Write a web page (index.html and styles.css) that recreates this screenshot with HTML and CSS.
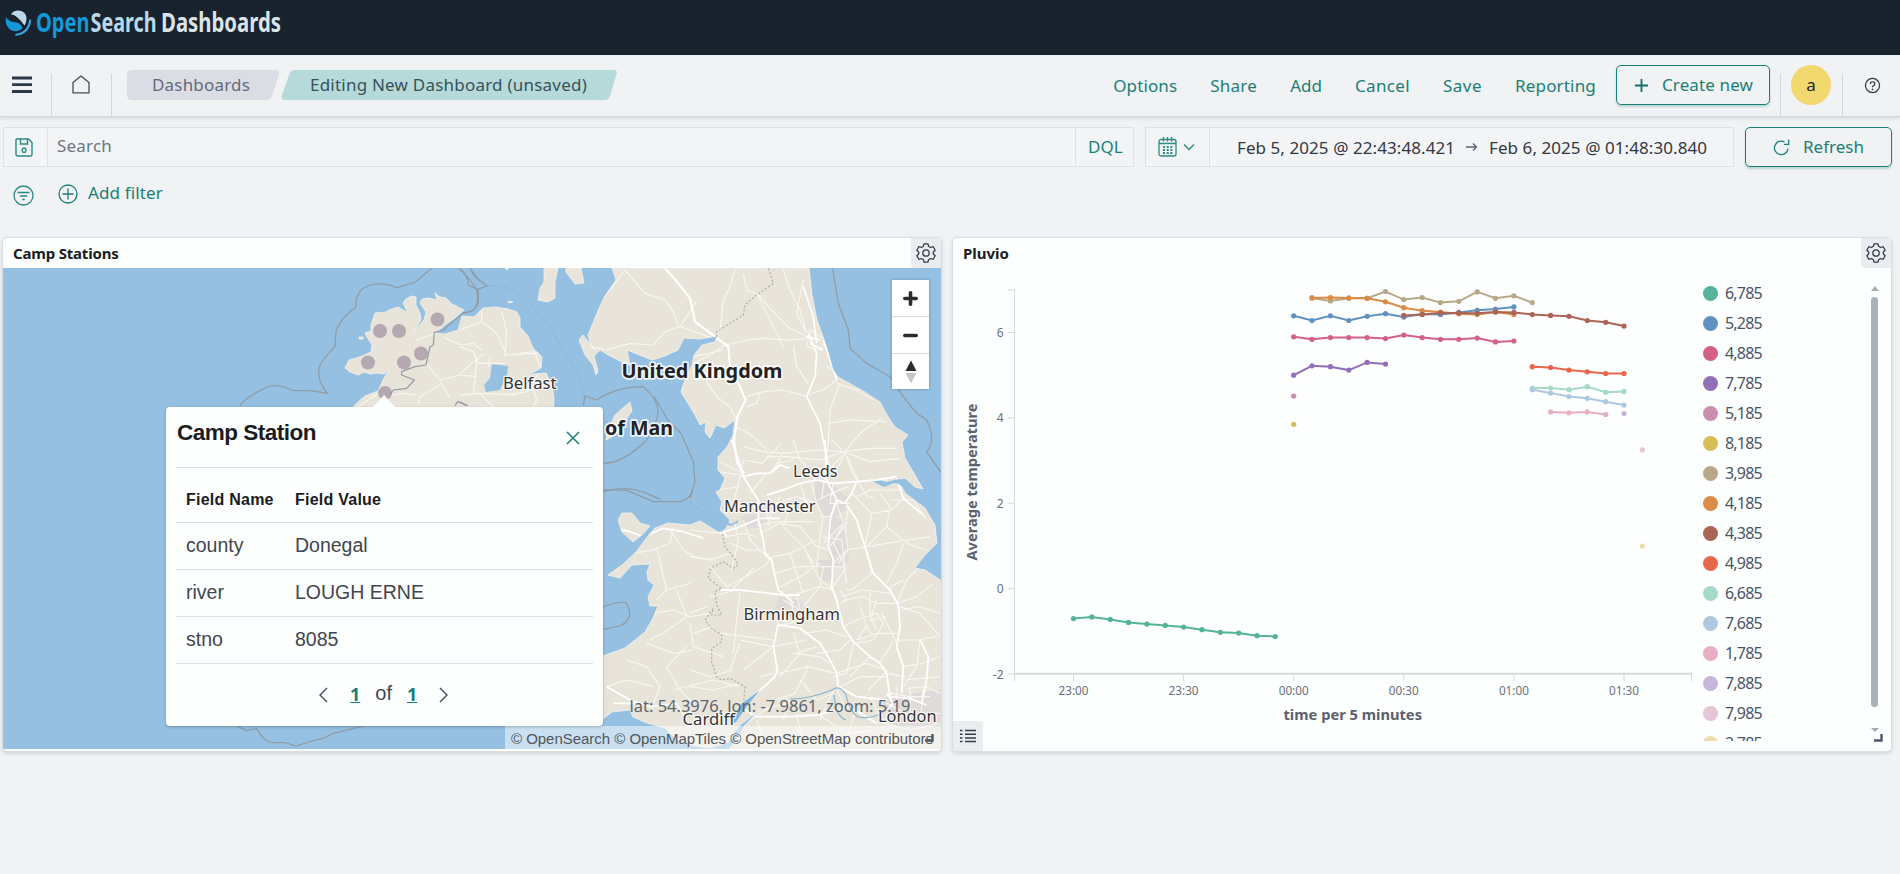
FILE: index.html
```html
<!DOCTYPE html>
<html lang="en">
<head>
<meta charset="utf-8">
<title>Editing New Dashboard (unsaved) - OpenSearch Dashboards</title>
<link rel="stylesheet" href="styles.css">
</head>
<body>
<header class="brandbar">
  <svg class="brand" viewBox="0 0 290 44" width="290" height="44">
    <path fill="#b9d9eb" d="M11 14.500C13 10 20 9 24 12.500c3.500 3.500 3 9 .5 13-1.500-1.500-2.500-3.500-4.500-5.500C17 17 14 14 11 14.500z"/>
    <path fill="#1297d8" d="M6 17c1.500 3 4 4.500 7.500 5C17 22.500 21 23 22.500 28c-4 4.500-10 4-13.500.5C6 25.500 5 21 6 17z"/>
    <path fill="#3ba6dc" d="M30 19.500c1 0 1.300.6 1.200 1.600C30 29.500 24 35.500 16 35.800c-1.200 0-1.200-1.800 0-2C23 33 28 28 29 20.700c.1-.8.300-1.200 1-1.200z"/>
    <text x="36" y="31.500" fill="#1297d8" textLength="53.500" lengthAdjust="spacingAndGlyphs">Open</text>
    <text x="90.500" y="31.500" fill="#b9d9eb" textLength="66" lengthAdjust="spacingAndGlyphs">Search</text>
    <text x="161" y="31.500" fill="#dce4ea" textLength="120" lengthAdjust="spacingAndGlyphs">Dashboards</text>
  </svg>
</header>

<nav class="navbar">
  <div class="nav-cell menu"><svg viewBox="0 0 20 18" width="20" height="18"><path d="M0 2h20M0 8.700h20M0 15.500h20" stroke="#2b3a4b" stroke-width="2.800"/></svg></div>
  <div class="nav-cell home"><svg viewBox="0 0 18 19" width="18" height="19"><path d="M1 7.500 9 1l8 6.500v10.300H1z" fill="none" stroke="#434d5b" stroke-width="1.300" stroke-linejoin="round"/></svg></div>
  <div class="crumbs">
    <svg class="crumb-bg" viewBox="0 0 491 30" width="491" height="30"><path fill="#dadde4" d="M5 0h144q4 0 3 4l-7 22q-1.500 4-5 4H5q-5 0-5-5V5q0-5 5-5z"/><path fill="#b6dad9" d="M168 0h318q5 0 3.500 4l-6.500 22q-1.200 4-5 4H158q-4.500 0-3.500-4l8-22q1.500-4 5.500-4z"/></svg>
    <span class="crumb c1">Dashboards</span>
    <span class="crumb c2">Editing New Dashboard (unsaved)</span>
  </div>
  <div class="actions">
    <a class="a-opt">Options</a><a class="a-share">Share</a><a>Add</a><a class="a-cancel">Cancel</a><a class="a-save">Save</a><a class="a-rep">Reporting</a>
  </div>
  <div class="btn create"><svg viewBox="0 0 13 13" width="13" height="13"><path d="M6.500 0v13M0 6.500h13" stroke="#0a7268" stroke-width="1.800"/></svg><span>Create new</span></div>
  <div class="avatar-cell"><span class="avatar">a</span></div>
  <div class="help"><svg viewBox="0 0 18 18" width="17" height="17"><circle cx="9" cy="9" r="7.500" fill="none" stroke="#343741" stroke-width="1.300"/><path d="M6.700 7.300c0-3 4.800-3 4.800-.2 0 1.900-2.500 1.700-2.500 3.700" fill="none" stroke="#343741" stroke-width="1.300"/><circle cx="9" cy="13" r=".9" fill="#343741"/></svg></div>
</nav>

<section class="querybar">
  <div class="search">
    <div class="saved"><svg viewBox="0 0 18 19" width="18" height="19"><g fill="none" stroke="#2c8a80" stroke-width="1.400"><path d="M2 1h11.500L17 4.500V16.500a1.500 1.500 0 0 1-1.500 1.500h-13A1.500 1.500 0 0 1 1 16.500V2a1 1 0 0 1 1-1z"/><path d="M5.500 1v5h7V1"/><rect x="7.300" y="10.300" width="3.600" height="4" rx="1"/></g></svg></div>
    <div class="placeholder">Search</div>
    <div class="dql">DQL</div>
  </div>
  <div class="dates">
    <div class="quick">
      <svg viewBox="0 0 19 20" width="19" height="20"><g fill="none" stroke="#2c8a80" stroke-width="1.300"><rect x="1" y="2.500" width="17" height="16.500" rx="2"/><path d="M1 6.500h17M5.500 0v4.500M9.500 0v4.500M13.500 0v4.500"/></g><path d="M5 10h9.500M5 13h9.500M5 16h9.500" stroke="#2c8a80" stroke-width="1.800" stroke-dasharray="2 1.700"/></svg>
      <svg viewBox="0 0 12 8" width="12" height="8"><path d="m1 1.500 5 5 5-5" fill="none" stroke="#2c8a80" stroke-width="1.300"/></svg>
    </div>
    <div class="range"><span>Feb 5, 2025 @ 22:43:48.421</span>
      <svg viewBox="0 0 12 10" width="12" height="10"><path d="M0 5h10.500M7 1.500 10.500 5 7 8.500" fill="none" stroke="#5a6270" stroke-width="1.300"/></svg>
      <span>Feb 6, 2025 @ 01:48:30.840</span></div>
  </div>
  <div class="btn refresh"><svg viewBox="0 0 17 17" width="17" height="17"><path d="M15 9.500A6.800 6.800 0 1 1 11.500 2.900M15.700.5v4.800h-4.800" fill="none" stroke="#1a7f75" stroke-width="1.300"/></svg><span>Refresh</span></div>
</section>

<section class="filters">
  <svg class="f-ic" viewBox="0 0 21 21" width="21" height="21"><g fill="none" stroke="#2c8a80" stroke-width="1.300"><circle cx="10.500" cy="10.500" r="9.500"/><path d="M4.500 7.500h12M6.800 11h7.400M9.300 14.500h2.400"/></g></svg>
  <svg class="f-add" viewBox="0 0 20 20" width="20" height="20"><g fill="none" stroke="#1a7f75" stroke-width="1.300"><circle cx="10" cy="10" r="9"/><path d="M10 4.500v11M4.500 10h11"/></g></svg>
  <span class="t-addf">Add filter</span>
</section>

<main class="grid">
  <article class="panel">
    <div class="panel-head"><h2 class="t-camp">Camp Stations</h2>
      <span class="gear"><svg viewBox="0 0 20 20" width="20" height="20"><path id="gear" d="M8 .8h4l.6 2.500 2 1.200 2.600-.8 2 3.500-1.900 1.800v2l1.900 1.800-2 3.500-2.600-.8-2 1.200-.6 2.500H8l-.6-2.500-2-1.200-2.600.8-2-3.500L2.700 11V9L.8 7.200l2-3.500 2.600.8 2-1.200z" fill="none" stroke="#343d4a" stroke-width="1.300" stroke-linejoin="round"/><circle cx="10" cy="10" r="3.200" fill="none" stroke="#343d4a" stroke-width="1.300"/></svg></span></div>
    <div class="map">
      <svg class="map-svg" viewBox="3 268 938 481" width="938" height="481">
        <defs><clipPath id="land">
          <path id="ireland" d="M435 293l5 4 6 1 6 6 12 6-9 8-9 6-10 9 9 1 13-4 4-14 12 1 9-9 12-1 13 2 9 3 3 6 0 9 8 9 5 12 9 9-1 11-9 5-8 4 10-3 12-1 5 10 3 14-1 24H340l18-19 7-6 13-5 6-13 5-8-5 4-6-1-8 1-6-2-6 3-8-3-5-4 4-8 7-2 6-2 9-4 1-7-5-8-2-4 6-2 0-6 4-12 11-1 3-2 9-3 5 3 5 3-5-10 3-4 6-3 4 1 0 8 4 8 1 7-7 11 10-11 2-8-6-9 2-4 7-1 8 2z"/>
          <path id="britain" d="M612 268l4 12-11 16-5 10-12 29 3 12 4 3-12-15-4 5 6 15 8 10 3 10 2-4-4-15 6-6 10 6 12 6 8 3-3-15 15 6 10 4 13-4 13-6 6-12 16 1 17-3-2 6-13 3-8 10-2 10-9 20-2 7 14 23 5 10 6-3-1 10 5 6 6-13 8 3 11-8-2 15-6 12-9 10 0 13 7 8-5 12-4 2 6 10-2 8 10 10-5 10-7 2-8-5-10-6-10 4-22-2-13 5-7 8-12 16-14 13-14 10 12 3 12-13 18-1-3 8 1 8 6 5-6 12 2 9 8 0-5 12-8 14-20 16-22 8-43 20v40l43 3 9-7 18-2 3 7 14 6 18 5 10 10 15 7 20 3 18-6 12-17 20-15-15 15-10 17-11 13-9 10-25 2-50 3H945V583l-20-13-10-2 10-13 12-12-2-18-10-17-20-15-3-6-12-9-22 4 17 0 20-4 10 9 8 2-8-14-10-17-3-16 6-7-13-8-8-12-7-13-15-10-27-15-5-7-7-25-9-25-5-25-3-27z"/>
          <path d="M618 520l4-7 10 0 8 10 10 3-7 8-10 8-11-10z"/>
        </clipPath></defs>
        <rect x="3" y="268" width="938" height="481" fill="#95c0e1"/>
        <g fill="#e8e4d9" stroke="#f4f2ec" stroke-width=".8">
          <use href="#ireland"/><use href="#britain"/>
          <path d="M618 520l4-7 10 0 8 10 10 3-7 8-10 8-11-10z"/>
          <path d="M544 268h14l-3 14 0 16-7 4-10-2 2-12 4-6zM566 268h15l3 15-9 1-9-12zM630 402l2 9-7 10-10 14-9 5 2-10 7-15zM359 337l4 0 0 2-4 0zM505 268h4l-2 2zM508 301l5 1-4 1z"/>
        </g>
        <g fill="#95c0e1"><path d="M492 364l16 2-1 9-7 15-14 2-2-7 6-7zM720 512l5 8 6 4 7-4 0 3-7 3-7-2zM868 481l8-2 10 3 12-3 8 4 8 6-10-4-10-2-10 4-10-5z"/></g>
        <g clip-path="url(#land)">
        <g fill="#dfdbd8"><path d="M815 480l8-1 12 8 12 10-2 12-14 10-10-6-6-12zM828 515l14 5 8 30-4 16-14 2-5-20zM740 516l15-2 14 4-8 10-16 0zM779 596l20 4 14 12-22 6-16-8zM882 698l59-8v40l-40 3-12-16zM841 450l6 0 2 6-8 0zM818 560l12 0 2 20-12 2z"/></g>
        <!-- minor roads -->
        <g fill="none" stroke="#f8f6f1" stroke-width="3.500" stroke-linejoin="round">
          <g transform="translate(0 230) scale(.33333)">
            <path d="M1330 320l50 25 40-5 25 20M1280 400l40 50 60-15 50 5M1320 455l30 50M1250 330l70-25M1255 520l5-20 60-35M1170 495l40-5 40 5M1430 390l-10 100M1135 490l-60 40"/>
          </g>
          <g transform="translate(460 230) scale(.33333)">
            <path d="M0 300l65-25 45 35 30 65 85-5 20 50-25 30M65 275v-35M125 245l15 60-5 75M0 350l40 15 15 35 80 0M0 430l70-60M0 495l60-5 110 5M140 495l60-10 45-40M180 370l40-5 30 15M210 450l20 60-10 20M90 380l-5 30M60 490l40 40"/>
            <path d="M495 120l-30 40-35 45M495 120l60 70 60 20 25 35 15 45M390 350l50 10 70-20 70 5 35-40 45-15 60 20 50 20M660 290l50-75M825 115l-10 40-25 60-10 90M850 130l10 50 35 15 35 40 60 60 60 30M970 120l20 60 30 60 20 70M890 190l30 60 50 100M800 345l60-15 50-5 80 5 50-5M700 400l60-30 40-30M700 380l90-20M730 440l40 60 40 30 20 40M860 500l50-15 60-5 70 20M900 490l-10 30-30 10M1000 350l10 60 35 50M1130 450l-40 30-50 15M1140 460l-30 80-5 100-10 50M1130 460l60 20 50 30M1100 580l70-10 110 5M1155 665l50-60 60-40M850 650l60 15 60 5 100-10 80 5 80-10 80 0M830 590l50 30 40 40M970 665l-30 60M1155 665l20 60 50 80M1155 665l-60 70-10 70M1030 150l-20 100 30 60M1060 120v60M1050 300l50 30-20 30-40-10zM1100 410l25 10 5 30"/>
          </g>
          <g transform="translate(460 490) scale(.33333)">
            <path d="M520 190l60-10 50-20 10-50M590 170l20 90 10 40-30 30M630 120l40 60 30 20 60 10M620 300l70-20M650 300l30 80-70 50-40 20M580 370l60-10 50 20 60-10M700 430l60-20M690 400l10 70 90 30M560 460l80 30 60-10M620 530l40 70 40 40M620 530l60-60M500 510l60 20 40 60-20 50M440 590l60-20 80 20M640 600l120-30 80 20"/>
          </g>
          <g transform="translate(690 440) scale(.33333)">
            <path d="M165 60l50 10 60-60M230 50l60 0 100 10 70-25 80 30 90-10M465 40l-30 60M465 40l40 80M465 40l-40-40M310 0l20 60 75 70M240 100l20-30 50-10M85 95l65 10M90 65l60 30M80 150l70-10M150 110l-20 80M180 160l50-60M160 60l-10 50 60-10"/>
            <path d="M0 350l60 10 60-20M0 270l90 10M110 290l50-10 40 10M120 310l50 20 50 0M135 250l10 50-20 90M160 240l20 60 60 60M60 380l50 60 110-60 30-30M130 445l60-60M150 460l-10 80-10 100M60 470l80-20M0 520l50-20M200 255l70-10 100 0M210 280l60-30 60 10 50 60 40 10M230 210l10 50M270 170l-30 60M330 130l20 60M260 190l60-20 60 20M300 200l-20 60 60 60 30 50M250 350l50-10 80-40M255 400l70-20 60 0M270 440l60-30 60-40M340 500l50-60 10-60M320 460l70-20 40 10M350 340l40 80 40 30M300 340l20 60 20 60M365 130l15 60 20 40-10 60-10 90M385 180l40-20 50-20M390 230l30 0 20-50M430 130l-10 60 60 0M400 310l60-60M395 290l60 10 10 80M440 190l20 60-30 60 30 60 10 60M390 380l70 0M475 200l-10 70 10 60-30 40M430 370l40-40 60-10 60-10 130-20M470 380l-40 60M470 250l-50 70M485 160l60 60-20 100M500 170l40-20 80 0 20 0M540 170l10 0M545 220l60-10 40-40M530 320l60-60 10-60-30-40M590 260l60 50 60 20M525 320l20 80-60 50-20 0M600 180l70 0 40 60M640 310l-20 60-30 60M640 420l-40 20M620 490l30-70 40-40M620 490l60-20 50-40M630 500l60 20 60 70M630 510l60-10 60 20M455 470l60-20 90 10M460 480l60-10 40 20 60 0M450 450l20 30-20 10M540 450l0 80 20 40M510 500l20 60-30 40M560 480l-20 60 50-10M500 540l60-20 20 30-30 50-50 10M530 560l20 30M500 600l60-20 70 0M460 560l40-20M575 520l30 60 20 40M470 590l-60-20-70 10M480 600l-30 30-70 10M490 610l-20 90-40 10M540 650l-60 60M440 700l90-30 60 20M450 740l60-30 80 0M620 600l60 0 60-10M690 600l-10 80-40 60M640 680l60-10 50-20M640 720l110-10M650 745l60-5 40 20M595 700l50 10M595 690l-60 60M570 665l40-60"/>
            <path d="M260 560l80-20 120-10M250 600l-80-10-80-10M340 540l-20-70M300 460l10 60M280 480l50 30M290 550l-20-40M150 600l100 20M160 690l90-70 100-20M320 640l60-20M310 580l20 60-60 70M310 640l80 10 30 20M265 700l90-20 80 20M355 680l-40 80-60 20M210 710l40-10M120 690l30-80M330 720l50 60 50-20M430 750l-40 90M440 750l30 60M300 780l-20 60M180 840l60-40 60-10M200 840l20 60M320 830l20 70M380 820l90 60 90-10M500 800l-30 100M540 770l40 80M600 760l60 10 60 0M590 790l60 30 100 0M620 740l0 90M660 740v100M700 750l-10 100M580 850l80 20 90-20M0 740l70 10 80-20M0 690l60 20 70-20"/>
          </g>
        </g>
        <!-- motorways -->
        <g fill="none" stroke="#fff" stroke-width="6.500" stroke-linejoin="round">
          <g transform="translate(460 230) scale(.33333)"><path d="M615 115l40 45 35 45 15 70 60 45 40 30 5 60 25 50 22 50-25 50-10 70 10 70 20 30"/><path stroke-width="5" d="M1045 310l25 60-5 70-25 60 40 80 20 100 5 30M1030 170l30 90 10 80M1090 330l20 60 20 60M1080 330l-40-10M1050 340l40 20"/></g>
          <g transform="translate(460 490) scale(.33333)"><path stroke-width="5" d="M460 640l70 0M440 590l70 40 60 20 80-10 30 50M450 110l60 15 40 15 60-25 60 10 60 20"/></g>
          <g transform="translate(690 440) scale(.33333)"><path stroke-width="5.500" d="M125 0l20 60 15 50 25 40 20 30 0 60 15 60 5 40 20 20 10 50 10 40 25 20 20 20M160 110l40-10 40 0 30-25 30 10M405 0l3 60-3 50 35 70 25 10 20-30 15-35 60-5 60-10M230 165l50-15 50-20 50-10 50 10 70-5M440 180l-20 60-5 80 15 40-5 80 15 40 20 80 30 45 50 45 30 20 20 30 10 70M470 195l30 45 25 80 25 80 50 50 25 45 5 65-10 60 20 60-5 80M620 115l20 60 60 50M690 600l25 50-5 70-15 70M90 450l60 0 70 8 60 7 50 0M265 550l-15 70 12 70-7 20-55 50-50 40M330 565l60 45 30 50 20 40 5 40 55 30 90 10M150 800l50 30 100 0 80-5 100-25 80 50M90 280l60-20 60-25 60 0M110 290l-20-30-20-30M265 555l70 10M600 770l60 5 50 20M590 760l20 30-20 20"/></g>
        </g>
        <path d="M740 705l20-15-13 16-11 16-5 2z" fill="#7db4dc"/><path d="M790 699q20 0 42-9 8-6 14 5 3 16 12 22 20 3 30-10M834 695q2 22 12 25" fill="none" stroke="#86b3d0" stroke-width="1.200"/>
        </g>
        <!-- maritime and state boundaries -->
        <g fill="none" stroke="#8f9ba5" stroke-width="3.600" stroke-linejoin="round">
          <path transform="translate(0 230) scale(.33333)" d="M1295 115l-50 42-55 16q-60-25-105 5-20 25-17 52-55 45-60 75l-3 45q-45 45-48 65-6 40 26 75l-53-8-50 0q-40-20-70-14-70 30-90 59M1375 115q30 20 30 50l30 15v40q-10 28-45 28l-60 52-27 8-3 37-10 5-12 55-33 5-40 15 0 10 38 15-23 25-40 5-10 15M1410 115l30 40M1365 527l8-12 30 12"/>
          <path transform="translate(460 230) scale(.33333)" d="M0 115l30 35 20 28q10 50-15 65l-25 7M30 115l15 25 37 28-32 10M370 525l5-27 35 12q60-40 140-40 40 35 44 70 0 40-34 90-70 70-130 70M583 500l40 70 40 40 37 85 5 60-15 50M430 785q70-20 130 5l40 18M1118 115l17 105 30 80 5 55 50 45 70 40 40 60 40 50 30 20q30 60 0 95l43 63M0 515l20 12"/>
          <path transform="translate(460 490) scale(.33333)" d="M430-1l70 2 80 34h80q35-10 37-37M430 350q60-20 70-10 25 45-20 68l-50 10"/>
          <path transform="translate(0 490) scale(.33333)" d="M710 708l30 14 30-6q25 45 50 42h35l35 10 35-12 45-11 30-15 90-22"/>
          <g stroke-dasharray="6 6" stroke="#b0aca7">
            <path stroke="#86a9c3" stroke-width="2.500" transform="translate(460 230) scale(.33333)" d="M85 168q100 0 130 60 60 60 90 130 60 70 65 142"/>
            <path transform="translate(460 230) scale(.33333)" d="M770 320v-15l80-50 5-30 35-30 50-35-15-45"/>
            <path transform="translate(690 440) scale(.33333)" d="M95 270l10 50 25 30 15 25-15 10-30-20-30 15-10 10-5 25 40 30-20 10 5 40 15 30-30 0 5-20-25 35 20 25 30 20 0 20-30 20 0 40 15 45 15 10 25-5 45 25-5 60"/>
            <path stroke="#86a9c3" stroke-width="2.500" transform="translate(690 440) scale(.33333)" d="M0 185l45 40 45 50"/>
          </g>
        </g>
        <g fill="#9f929f" fill-opacity=".72"><circle cx="380" cy="331" r="7"/><circle cx="399" cy="331" r="7"/><circle cx="437.500" cy="319.500" r="7"/><circle cx="421" cy="353.500" r="7"/><circle cx="404" cy="362.500" r="7"/><circle cx="368" cy="362.500" r="7"/><circle cx="385" cy="393" r="7"/></g>
        <g class="labels">
          <text x="503" y="388.500" textLength="53.500" lengthAdjust="spacingAndGlyphs">Belfast</text>
          <text x="793" y="477" textLength="44.500" lengthAdjust="spacingAndGlyphs">Leeds</text>
          <text x="724" y="512" textLength="91.500" lengthAdjust="spacingAndGlyphs">Manchester</text>
          <text x="743.500" y="620" textLength="96.500" lengthAdjust="spacingAndGlyphs">Birmingham</text>
          <text x="682.500" y="724.500" textLength="52.500" lengthAdjust="spacingAndGlyphs">Cardiff</text>
          <text x="878" y="722" textLength="58.500" lengthAdjust="spacingAndGlyphs">London</text>
          <text class="country" x="621.500" y="377.700" textLength="161" lengthAdjust="spacingAndGlyphs">United Kingdom</text>
          <text class="country" x="605" y="434.500" textLength="68" lengthAdjust="spacingAndGlyphs">of Man</text>
        </g>
        <text class="coords" x="629.500" y="711.500" textLength="281" lengthAdjust="spacingAndGlyphs">lat: 54.3976, lon: -7.9861, zoom: 5.19</text>
      </svg>
      <div class="zoomctl">
        <span><svg viewBox="0 0 15 15" width="15" height="15"><path d="M7.500 1.800v11.400M1.800 7.500h11.400" stroke="#2a2c2e" stroke-width="3.600" stroke-linecap="round"/></svg></span>
        <span><svg viewBox="0 0 15 15" width="15" height="15"><path d="M1.800 7.500h11.400" stroke="#2a2c2e" stroke-width="3.600" stroke-linecap="round"/></svg></span>
        <span><svg viewBox="0 0 12 24" width="12" height="24"><path d="M6 .5 11.500 11H.5z" fill="#2a2c2e"/><path d="M6 23.500 11.500 13H.5z" fill="#c4c6c8"/></svg></span>
      </div>
      <div class="attrib">© OpenSearch © OpenMapTiles © OpenStreetMap contributors</div>
      <svg class="resizer left" viewBox="0 0 9 8" width="9" height="8"><path d="M0 6.500h7.500V0" fill="none" stroke="#4c5866" stroke-width="2.400"/></svg>
      <div class="popup">
        <div class="pop-head"><h3>Camp Station</h3><svg viewBox="0 0 14 14" width="14" height="14"><path d="m1 1 12 12M13 1 1 13" stroke="#1a7f75" stroke-width="1.500"/></svg></div>
        <table class="pop-table">
          <tr><th>Field Name</th><th>Field Value</th></tr>
          <tr><td>county</td><td>Donegal</td></tr>
          <tr><td>river</td><td>LOUGH ERNE</td></tr>
          <tr><td>stno</td><td>8085</td></tr>
        </table>
        <div class="pager"><svg viewBox="0 0 9 16" width="9" height="16"><path d="M8 1 1 8l7 7" fill="none" stroke="#4b5563" stroke-width="1.500"/></svg><a>1</a><span>of</span><a>1</a><svg viewBox="0 0 9 16" width="9" height="16"><path d="m1 1 7 7-7 7" fill="none" stroke="#4b5563" stroke-width="1.500"/></svg></div>
      </div>
    </div>
  </article>

  <article class="panel">
    <div class="panel-head"><h2>Pluvio</h2>
      <span class="gear"><svg viewBox="0 0 20 20" width="20" height="20"><use href="#gear"/><circle cx="10" cy="10" r="3.200" fill="none" stroke="#343d4a" stroke-width="1.300"/></svg></span></div>
    <div class="viz">
      <svg id="chart" viewBox="953 268 747 483" width="747" height="483"></svg>
      <ul id="legend"></ul>
      <div class="scroll"><i class="up"></i><i class="thumb"></i><i class="down"></i></div>
      <span class="listbtn"><svg viewBox="0 0 16 14" width="16" height="14"><path d="M5 1.500h11M5 5.200h11M5 8.900h11M5 12.600h11M0 1.500h2.500M0 5.200h2.500M0 8.900h2.500M0 12.600h2.500" stroke="#343d4a" stroke-width="1.500"/></svg></span>
      <svg class="resizer right" viewBox="0 0 9 8" width="9" height="8"><path d="M0 6.500h7.500V0" fill="none" stroke="#4c5866" stroke-width="2.400"/></svg>
    </div>
  </article>
</main>
<script src="chart.js"></script>
</body>
</html>
```
FILE: styles.css
```css
* { box-sizing: border-box; }
body { margin: 0; background: #f0f2f4; color: #343741; font: 17px/1.35 "Noto Sans", "Open Sans", sans-serif; height: 874px; overflow: hidden; }
h2, h3 { margin: 0; }
a { color: #1a7f75; }

.brandbar { height: 55px; background: #18232e; }
.brand { display: block; font: bold 27px "Noto Sans", sans-serif; }

.navbar { height: 62px; display: flex; border-bottom: 1px solid #cfd5db; box-shadow: 0 2px 3px rgba(120, 135, 150, .18); }
.nav-cell { display: flex; margin-top: 19px; border-right: 1px solid #d3d8dd; height: 43px; }
.menu { width: 52px; padding: 2px 0 0 12px; }
.home { width: 60px; padding: 1px 0 0 20px; }
.crumbs { margin: 15px 0 0 15px; width: 491px; height: 30px; display: grid; }
.crumb-bg { grid-area: 1 / 1; }
.crumb { grid-area: 1 / 1; line-height: 30px; white-space: nowrap; }
.c1 { padding-left: 25px; color: #646a77; letter-spacing: .18px; }
.c2 { padding-left: 183px; color: #37525a; letter-spacing: .22px; }
.actions { display: flex; margin: 16px 20px 0 auto; line-height: 29px; gap: 33px; }
.a-opt { letter-spacing: .11px; }
.a-share { letter-spacing: .27px; }
.a-cancel { letter-spacing: .35px; }
.a-save { letter-spacing: .47px; }
.a-rep { letter-spacing: .18px; }
.btn { border: 1.500px solid #1a7f75; border-radius: 5px; box-shadow: 0 2px 2px rgba(26, 127, 117, .25); display: flex; align-items: center; color: #1a7f75; height: 40px; white-space: nowrap; }
.create { margin-top: 10px; width: 154px; padding-left: 18px; gap: 14px; letter-spacing: .12px; }
.avatar-cell { display: flex; width: 63px; height: 43px; margin: 19px 0 0 10px; border: solid #d3d8dd; border-width: 0 1px; }
.avatar { width: 40px; height: 40px; margin: -9px 0 0 10px; border-radius: 50%; background: #f1d86f; color: #23262b; text-align: center; line-height: 39px; }
.help { width: 57px; padding: 22px 0 0 21px; }

.querybar { display: flex; padding: 10px 8px 0 3px; gap: 11px; }
.search, .dates { height: 40px; border: 1px solid #dde2e6; background: #f2f4f6; display: flex; line-height: 37px; }
.search { width: 1131px; }
.saved { width: 44px; border-right: 1px solid #dde2e6; padding: 10px 0 0 11px; line-height: 0; }
.placeholder { flex: 1; padding-left: 9px; color: #70757f; letter-spacing: .2px; line-height: 35px; }
.dql { width: 58px; border-left: 1px solid #dde2e6; padding-left: 12px; color: #1a7f75; }
.dates { width: 589px; }
.quick { width: 64px; border-right: 1px solid #dde2e6; display: flex; align-items: center; gap: 6px; padding-left: 12px; }
.range { display: flex; align-items: center; gap: 11px; padding-left: 27px; letter-spacing: .07px; white-space: nowrap; }
.refresh { width: 147px; padding-left: 27px; gap: 13px; }

.filters { height: 71px; display: flex; padding: 17px 0 0 13px; color: #1a7f75; }
.f-ic { margin-top: 1px; }
.f-add { margin-left: 24px; }
.t-addf { margin-left: 10px; line-height: 18px; letter-spacing: .14px; }

.grid { display: grid; grid-template-columns: 938px 938px; gap: 12px; padding-left: 3px; }
.panel { height: 513px; background: #fdfefe; border-radius: 4px; box-shadow: 0 0 0 1px #d9dde1, 0 2px 4px rgba(80, 90, 100, .25); }
.panel-head { height: 30px; display: flex; justify-content: space-between; }
.panel-head h2 { font-size: 15px; line-height: 31px; padding-left: 10px; color: #1a1c21; }
.panel-head .t-camp { letter-spacing: -.19px; }
.gear { width: 30px; height: 30px; background: #e9edf0; display: grid; place-items: center; border-radius: 0 4px 0 4px; }

.map { position: relative; height: 481px; }
.map-svg { display: block; }
.labels { font: 16.500px "Noto Sans", sans-serif; fill: #333; stroke: #fff; stroke-width: 2.500px; stroke-opacity: .85; paint-order: stroke; stroke-linejoin: round; }
.country { font-size: 20px; font-weight: bold; fill: #222; stroke-width: 3.500px; }
.coords { font: 16.500px "Noto Sans", sans-serif; fill: #5b6570; }
.zoomctl { position: absolute; right: 12px; top: 12px; width: 37px; height: 109px; background: #fff; box-shadow: 0 0 2px 1px rgba(0, 0, 0, .15); display: grid; grid-template-rows: 36px 37px 36px; }
.zoomctl span { display: grid; place-items: center; }
.zoomctl span + span { border-top: 1px solid #dadada; }
.attrib { position: absolute; right: 0; bottom: 0; width: 436px; height: 23px; background: rgba(255, 255, 255, .5); padding-left: 6px; font: 15px/25px "Liberation Sans", sans-serif; letter-spacing: -.03px; color: #50555a; white-space: nowrap; }
.resizer { position: absolute; }
.resizer.left { right: 7px; bottom: 7px; }
.resizer.right { right: 8px; bottom: 9px; }

.popup { position: absolute; left: 163px; top: 139px; width: 437px; height: 319px; background: #fdfefe; border-radius: 4px; box-shadow: 0 1px 3px rgba(0, 0, 0, .25); padding: 0 10px; font-family: "Liberation Sans", sans-serif; color: #3f4650; }
.popup::before { content: ""; position: absolute; left: 207px; top: -12px; border: solid transparent; border-width: 0 11px 12px; border-bottom-color: #fdfefe; }
.pop-head { height: 61px; border-bottom: 1px solid #d8dde2; display: flex; justify-content: space-between; padding: 9px 13px 0 1px; }
.pop-head h3 { font-size: 22.500px; line-height: 34px; letter-spacing: -.5px; color: #1a1c21; }
.pop-head svg { margin-top: 15px; }
.pop-table { border-collapse: collapse; width: 417px; margin-top: 9px; font-size: 19.500px; line-height: 24px; }
.pop-table tr { height: 47px; border-bottom: 1px solid #d8dde2; }
.pop-table td, .pop-table th { padding: 0 0 1px 10px; text-align: left; width: 109px; }
.pop-table td + td, .pop-table th + th { width: auto; }
.pop-table tr:first-child { height: 45px; }
.pop-table th { font-size: 16px; letter-spacing: .24px; color: #1a1c21; padding-top: 2px; }
.pager { display: flex; height: 62px; align-items: center; padding-left: 143px; }
.pager a { font: bold 18px/20px "Noto Sans", sans-serif; text-decoration: underline; margin-bottom: 2px; }
.pager a:first-of-type { margin-left: 22px; }
.pager span { font-size: 20px; margin: 0 15px 2px 15px; }
.pager svg:last-child { margin-left: 22px; }

.viz { position: relative; height: 483px; display: flex; }
.viz > svg:first-child { flex: none; }
.viz .axis { font: 12px "Noto Sans", sans-serif; fill: #69707d; }
.viz .title { font: bold 15px "Noto Sans", sans-serif; fill: #5a6270; }
#legend { list-style: none; margin: 10px 0 0 3px; padding: 0; width: 160px; height: 463px; overflow: hidden; }
#legend li { height: 30px; display: flex; align-items: center; gap: 7px; font-size: 16px; letter-spacing: -.8px; color: #4a5564; }
#legend i { width: 15px; height: 15px; border-radius: 50%; }
#legend b { font-weight: normal; padding-top: 1px; }
.scroll { width: 7px; margin: 18px 0 0 8px; height: 447px; display: flex; flex-direction: column; align-items: center; }
.up, .down { border: solid transparent; border-width: 0 4.500px 5px; border-bottom-color: #a3abb3; }
.down { border-width: 4px 4.500px 0; border-top-color: #a3abb3; margin-top: 21px; }
.thumb { width: 7px; height: 410px; flex: none; margin-top: 6px; border-radius: 4px; background: #a9b1b9; }
.listbtn { position: absolute; left: 0; bottom: 0; width: 30px; height: 30px; background: #e9edf0; border-radius: 0 4px 0 4px; display: grid; place-items: center; }
```
FILE: chart.js
```javascript
// Each series: legend label, colour, index of its first 5-minute bucket (0 = 23:00), values
const series = [
  ['6,785', '#54b399', 0, [-.70, -.66, -.72, -.79, -.83, -.86, -.90, -.96, -1.02, -1.04, -1.10, -1.12]],
  ['5,285', '#6092c0', 12, [6.39, 6.28, 6.39, 6.28, 6.38, 6.44, 6.36, 6.43, 6.42, 6.47, 6.52, 6.55, 6.60]],
  ['4,885', '#d36086', 12, [5.90, 5.84, 5.88, 5.88, 5.88, 5.86, 5.94, 5.88, 5.84, 5.84, 5.87, 5.78, 5.80]],
  ['7,785', '#9170b8', 12, [5.00, 5.22, 5.20, 5.12, 5.30, 5.26]],
  ['5,185', '#ca8eae', 12, [4.51]],
  ['8,185', '#d6bf57', 12, [3.85]],
  ['3,985', '#b9a888', 13, [6.81, 6.74, 6.80, 6.80, 6.96, 6.77, 6.82, 6.70, 6.73, 6.95, 6.80, 6.86, 6.70]],
  ['4,185', '#da8b45', 13, [6.81, 6.82, 6.81, 6.80, 6.72, 6.58, 6.51, 6.48, 6.44, 6.42, 6.48, 6.42]],
  ['4,385', '#aa6556', 18, [6.40, 6.42, 6.46, 6.46, 6.45, 6.48, 6.47, 6.42, 6.40, 6.38, 6.28, 6.24, 6.15]],
  ['4,985', '#e7664c', 25, [5.20, 5.18, 5.12, 5.08, 5.04, 5.04]],
  ['6,685', '#a5d9c8', 25, [4.70, 4.70, 4.66, 4.73, 4.60, 4.62]],
  ['7,685', '#aec8e0', 25, [4.66, 4.58, 4.50, 4.46, 4.38, 4.30]],
  ['1,785', '#e8aec3', 26, [4.14, 4.12, 4.14, 4.08]],
  ['7,885', '#c8b5dc', 30, [4.10]],
  ['7,985', '#e5c5d6', 31, [3.25]],
  ['2,785', '#ebdcab', 31, [1.0]]
];
const px = i => 1073.5 + i * 18.35;
const py = v => 588.7 - v * 42.7;
let out = '<g stroke="#d6d9de" stroke-width="1" fill="none"><path d="M1007.5 290H1014.5V681"/>';
for (const v of [6, 4, 2, 0, -2]) out += `<path d="M1007.500 ${py(v)}h7"/>`;
for (const i of [0, 6, 12, 18, 24, 30]) out += `<path d="M${px(i)} 674v7"/>`;
out += '<path stroke-width="2" d="M1014 673.700H1692"/><path d="M1691.500 674v7"/></g><g class="axis">';
for (const v of [6, 4, 2, 0, -2]) out += `<text x="1003.500" y="${py(v) + 4.5}" text-anchor="end">${v}</text>`;
['23:00', '23:30', '00:00', '00:30', '01:00', '01:30'].forEach((t, k) => {
  out += `<text x="${px(k * 6)}" y="695" text-anchor="middle" textLength="30" lengthAdjust="spacingAndGlyphs">${t}</text>`;
});
out += '</g><text class="title" x="1283.500" y="719.500" textLength="138.500" lengthAdjust="spacingAndGlyphs">time per 5 minutes</text>';
out += '<text class="title" transform="translate(977 560.500) rotate(-90)" textLength="157" lengthAdjust="spacingAndGlyphs">Average temperature</text>';
for (const [, color, start, values] of series) {
  const pts = values.map((v, k) => [px(start + k).toFixed(1), py(v).toFixed(1)]);
  out += `<polyline points="${pts.join(' ')}" fill="none" stroke="${color}" stroke-width="2"/>`;
  out += pts.map(p => `<circle cx="${p[0]}" cy="${p[1]}" r="2.600" fill="${color}"/>`).join('');
}
document.getElementById('chart').innerHTML = out;
document.getElementById('legend').innerHTML = series.map(s => `<li><i style="background:${s[1]}"></i><b>${s[0]}</b></li>`).join('');
```
